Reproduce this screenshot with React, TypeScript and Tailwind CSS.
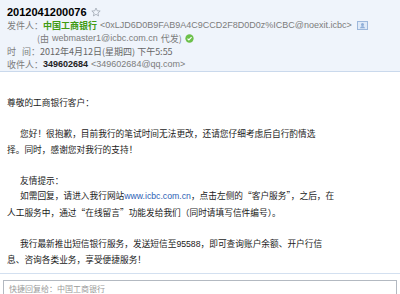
import React from "react";

const CJK = { fontFamily: '"Noto Sans CJK SC", "Noto Sans", sans-serif' };
const HEAD = { fontFamily: '"Liberation Sans", "Noto Sans CJK SC", sans-serif' };

function Star() {
  return (
    <svg width="10" height="10" viewBox="0 0 24 24" className="ml-[4px]">
      <path
        d="M12 2.5l2.9 6.6 7.1.6-5.4 4.7 1.6 7-6.2-3.8-6.2 3.8 1.6-7L2 9.7l7.1-.6z"
        fill="none"
        stroke="#9aa3ad"
        strokeWidth="1.8"
        strokeLinejoin="round"
      />
    </svg>
  );
}

function Check() {
  return (
    <svg width="9" height="9" viewBox="0 0 10 10" className="ml-[3px]">
      <circle cx="5" cy="5" r="4.6" fill="#6cc04a" />
      <path d="M2.8 5.1l1.5 1.5 3-3.1" fill="none" stroke="#fff" strokeWidth="1.3" />
    </svg>
  );
}

function Card() {
  return (
    <svg width="11" height="9" viewBox="0 0 11 9" className="ml-[5px]">
      <rect x="0.5" y="0.5" width="10" height="8" fill="#dfeaf8" stroke="#9db8dc" />
      <circle cx="5.5" cy="3.6" r="1.5" fill="#8eaed8" />
      <path d="M3 7.2c.4-1.5 1.4-2 2.5-2s2.1.5 2.5 2z" fill="#8eaed8" />
    </svg>
  );
}

export default function App() {
  return (
    <div className="w-[400px] h-[294px] overflow-hidden bg-white flex flex-col">
      <div
        className="bg-[#eff4fb] border-b border-[#cad9ec] pl-[7px] pt-[5px] h-[72px] flex flex-col"
        style={HEAD}
      >
        <div className="flex items-center h-[14px] text-[11px] font-bold text-black">
          2012041200076
          <Star />
        </div>
        <div className="flex items-center h-[13px] text-[9px] text-[#7c7c7c] whitespace-nowrap">
          <span style={CJK}>发件人：</span>
          <span className="font-bold text-[#3f9a12]" style={CJK}>中国工商银行</span>
          <span className="ml-[3px]">&lt;0xLJD6D0B9FAB9A4C9CCD2F8D0D0z%ICBC@noexit.icbc&gt;</span>
          <Card />
        </div>
        <div className="flex items-center h-[13px] text-[9px] text-[#7c7c7c] whitespace-nowrap pl-[30px]">
          <span style={CJK}>(由</span>
          <span className="ml-[3px]">webmaster1@icbc.com.cn</span>
          <span className="ml-[3px]" style={CJK}>代发)</span>
          <Check />
        </div>
        <div className="flex items-center h-[13px] text-[9px] text-[#7c7c7c] whitespace-nowrap">
          <span style={CJK}>时&nbsp;&nbsp;&nbsp;间：</span>
          <span className="text-[#666]" style={CJK}>2012年4月12日(星期四) 下午5:55</span>
        </div>
        <div className="flex items-center h-[13px] text-[9px] text-[#7c7c7c] whitespace-nowrap">
          <span style={CJK}>收件人：</span>
          <span className="font-bold text-[#222]">349602684</span>
          <span className="ml-[3px]">&lt;349602684@qq.com&gt;</span>
        </div>
      </div>

      <div
        className="pl-[7px] mt-[23px] text-[8.7px] leading-[15.5px] text-[#1a1a1a] whitespace-nowrap"
        style={CJK}
      >
        <div>尊敬的工商银行客户：</div>
        <div className="h-[15.5px]" />
        <div className="pl-[13px]">您好！很抱歉，目前我行的笔试时间无法更改，还请您仔细考虑后自行酌情选</div>
        <div>择。同时，感谢您对我行的支持！</div>
        <div className="h-[15.5px]" />
        <div className="pl-[13px]">友情提示：</div>
        <div className="pl-[13px]">
          如需回复，请进入我行网站<span className="text-[#2c61b5]" style={HEAD}>www.icbc.com.cn</span>，点击左侧的“客户服务”，之后，在
        </div>
        <div>人工服务中，通过“在线留言”功能发给我们（同时请填写信件编号）。</div>
        <div className="h-[15.5px]" />
        <div className="pl-[13px]">
          我行最新推出短信银行服务，发送短信至<span style={HEAD}>95588</span>，即可查询账户余额、开户行信
        </div>
        <div>息、咨询各类业务，享受便捷服务！</div>
      </div>

      <div className="mt-[5px] h-[4px] bg-[#e4edf8] border-t border-[#d3e0f0]" />
      <div className="flex-1 px-[3px] pt-[6px] bg-white">
        <div className="h-[20px] border border-[#b3b9c1] bg-white pl-[5px] flex items-start pt-[2px]">
          <span className="text-[8px] text-[#9a9a9a]" style={CJK}>快捷回复给：中国工商银行</span>
        </div>
      </div>
    </div>
  );
}
